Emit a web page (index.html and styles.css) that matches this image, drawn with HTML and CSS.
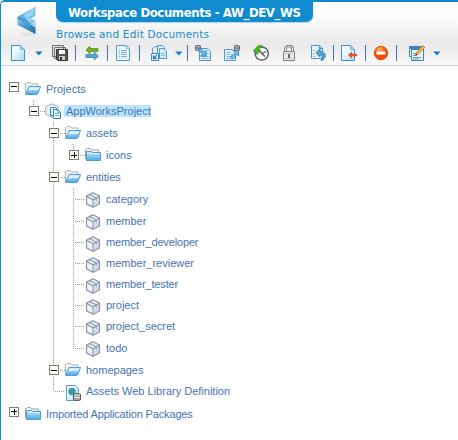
FILE: index.html
```html
<!DOCTYPE html>
<html lang="en">
<head>
<meta charset="utf-8">
<title>Workspace Documents</title>
<link rel="stylesheet" href="styles.css">
</head>
<body>
<svg class="defs" aria-hidden="true">
  <defs>
    <linearGradient id="paper" x2="1" y2="1"><stop offset="0" stop-color="#fff"/><stop offset=".4" stop-color="#e8f6ff"/><stop offset="1" stop-color="#a8dafb"/></linearGradient>
    <linearGradient id="blue" x2="0" y2="1"><stop offset="0" stop-color="#cbe9fc"/><stop offset="1" stop-color="#4ba8e6"/></linearGradient>
    <linearGradient id="cubeR" x2="1" y2="1"><stop offset="0" stop-color="#f2f4fb"/><stop offset="1" stop-color="#b8c3e0"/></linearGradient>
    <radialGradient id="orange" cx=".4" cy=".25"><stop offset="0" stop-color="#ffb25a"/><stop offset="1" stop-color="#ea4d08"/></radialGradient>
    <linearGradient id="logoA" x2="1" y2="0"><stop offset="0" stop-color="#2b7fc0"/><stop offset="1" stop-color="#8accf2"/></linearGradient>
    <linearGradient id="logoB" x2="1" y2="1"><stop offset="0" stop-color="#82c8f0"/><stop offset="1" stop-color="#1b66a8"/></linearGradient>
    <symbol id="open" viewBox="0 0 16 16"><path d="M.5 13V2.500h1l1-1h3l1 1.500h6.500V6" fill="#f4f6f7" stroke="#a9b2b8"/><path d="M.7 13.500 4 5.500h11.500L13 12.500l-1.500 1z" fill="url(#blue)" stroke="#4f9fd4"/><path d="M4.600 6.400h9.800l-.8 2-9.900 1z" fill="#e1f4ff"/></symbol>
    <symbol id="closed" viewBox="0 0 16 16"><path d="M.5 12V2.500h1l1-1h3l1 1.500h7V5" fill="#f2f4f5" stroke="#9aa4aa"/><path d="M1.500 13.500V4.500h5l1 1h8v8z" fill="url(#blue)" stroke="#4a9cd3"/><path d="M2.500 6.500h12" stroke="#d4edfc"/></symbol>
    <symbol id="cube" viewBox="0 0 16 16"><path d="m8 .8 6.500 3.400v7.600L8 15.300 1.500 11.800V4.200z" fill="#eff2f8" stroke="#8b96a1" stroke-width="1.200"/><path d="M8 8v6.600l6-3.300V4.800z" fill="url(#cubeR)"/><path d="m1.500 4.300 6.500 3.500 6.500-3.500M8 7.800v7.300M4.700 2.600l6.500 3.500v2.400" fill="none" stroke="#8b96a1" stroke-width="1.100"/></symbol>
    <symbol id="project" viewBox="0 0 16 16"><path d="m7 .8 6.200 3v7.400L7 14.300.8 11.200V3.800z" fill="#f2f3f5" stroke="#a5aab0"/><path d="M5.500 4.500h5l2 2v6h-7z" fill="#def2ff" stroke="#2b87c7"/><path d="M8.500 6.500h4l3 3v6h-7z" fill="#f4fbff" stroke="#2b87c7"/><path d="M10 10.500h4m-4 2h4M12.500 6.500v3h3" fill="none" stroke="#68b2e2"/></symbol>
    <symbol id="weblib" viewBox="0 0 16 16"><path d="M1.500.500h9l3 3v12h-12z" fill="url(#paper)" stroke="#5a9fce"/><circle cx="7" cy="6.500" r="3.700" fill="#3a91d8"/><path d="M4 5c1-2 3-2 4-1L7 6 5 7zm4 2 2-1v2L8 10z" fill="#45a94b"/><path d="M8.500 9.500c0-1.200 7-1.200 7 0v5.300c0 1.200-7 1.200-7 0z" fill="#a0a0a0" stroke="#555"/><path d="M9 10h6m-6 2.500h6" stroke="#ededed"/></symbol>
    <symbol id="new" viewBox="0 0 16 16"><path d="M1.500.500h9l4 4v11h-13z" fill="url(#paper)" stroke="#418fc4"/><path d="M10.500.500v4h4" fill="#a5d9f8" stroke="#73b6df"/></symbol>
    <symbol id="save" viewBox="0 0 16 16"><path d="M.5.500h11v11H.5zM2.500 2.500h11v11h-11z" fill="#e3e3e3" stroke="#707070"/><path d="M4.500 4.500h11v11h-10l-1-1z" fill="#575757" stroke="#383838"/><path d="M7 5h6v4H7z" fill="#fff"/><path d="M7 11h6v4H7z" fill="#ccc"/><path d="M8 12h2v3H8z" fill="#333"/></symbol>
    <symbol id="swap" viewBox="0 0 16 16"><path d="m2 5 4-4v2.500h8v3H6V9z" fill="#72b51b" stroke="#4a8910" stroke-width=".7"/><path d="m14.300 11-4-4v2.500H2v3h8.300V15z" fill="#51a2d6" stroke="#2875ac" stroke-width=".7"/></symbol>
    <symbol id="list" viewBox="0 0 16 16"><path d="M1.500.500h10l3 3v12h-13z" fill="#e7f5fd" stroke="#4f9fd0"/><path d="M11.500.500v3h3" fill="#bce3fa" stroke="#73b6df"/><path d="M4 5.500h1m1 0h6m-8 2h1m1 0h6m-8 2h1m1 0h6m-8 2h1m1 0h6" stroke="#83afca"/></symbol>
    <symbol id="pages" viewBox="0 0 16 16"><path d="M1.500 13V3.500l3-2h5V12" fill="#e6edf2" stroke="#7894a5"/><path d="M6.500.500h5l2 2v8h-7z" fill="#e2f3fd" stroke="#4798cd"/><path d="M8.500 3.500h4l3 3v7h-7z" fill="#d6eefd" stroke="#4798cd"/><path d="M10 8.500h4m-4 2h4" stroke="#7cbee5"/><path d="M.5 8.500h7v7h-7z" fill="#f4fbff" stroke="#3b8bc0"/><path d="M6 10 2.500 13.500m0-3v3h3" fill="none" stroke="#1f7cbf" stroke-width="1.300"/></symbol>
    <symbol id="import" viewBox="0 0 16 16"><path d="M4.500 3.500h8l3 3v9h-11z" fill="#dff2fd" stroke="#4798cd"/><path d="M11 5.500h2M10 8.500h4m-8 3h8m-8 2h8" stroke="#84bedf"/><path d="M.5 1c0-.8 5-.8 5 0v4c0 .8-5 .8-5 0z" fill="#bbb" stroke="#666"/><path d="M1 3h4" stroke="#555"/><path d="m3 5 2-2 4.500 4.500 1.500-2V11H5.500L8 9.500z" fill="#6ebcf0" stroke="#1c78b9" stroke-width=".8"/></symbol>
    <symbol id="export" viewBox="0 0 16 16"><path d="M.5 4.500h8l3 3v8H.5z" fill="#e7f5fd" stroke="#4798cd"/><path d="M2 7.500h5m-5 2h6m-6 2h5m-5 2h6" stroke="#84bedf"/><path d="M10.500 1c0-.8 5-.8 5 0v4c0 .8-5 .8-5 0z" fill="#bbb" stroke="#666"/><path d="M11 3h4" stroke="#555"/><path d="m6.500 12 4.500-4.500L9 5.500h5.500V11l-1.800-2L9 14z" fill="#6ebcf0" stroke="#1c78b9" stroke-width=".8"/></symbol>
    <symbol id="history" viewBox="0 0 16 16"><circle cx="8.700" cy="8.500" r="6.600" fill="#f5fafb" stroke="#59666e" stroke-width="1.500"/><path d="m9 8.500-3-3m3 3 4-2M9 8.500l3 3" stroke="#4b545a" stroke-width="1.100"/><circle cx="9" cy="8.500" r="1" fill="#d73c24"/><path d="M9 .5C5 .2 2.500 2 2.200 5H.3L4 9.500 7.500 5H5.300C5.500 3.500 7 2.500 9 2.800z" fill="#50b81b" stroke="#23860c" stroke-width=".7"/></symbol>
    <symbol id="lock" viewBox="0 0 16 16"><path d="M4.500 7V4c0-3.800 7-3.800 7 0v3" fill="none" stroke="#808080" stroke-width="2.800"/><path d="M4.500 7V4c0-3.500 7-3.500 7 0v3" fill="none" stroke="#e8e8e8"/><path d="M2.500 6.500h11v9h-11z" fill="#eaeaea" stroke="#808080"/><path d="M4 8.500h8m-8 5h8" stroke="#c8c8c8"/><path d="M7 9h2v4H7z" fill="#666"/></symbol>
    <symbol id="revert" viewBox="0 0 16 16"><path d="M1.500.500h8l3 3v10h-11z" fill="#e0f3fe" stroke="#4798cd"/><path d="M9.500.500v3h3" fill="none" stroke="#4798cd"/><path d="M3 5.500h2m-2 3h2m-2 3h2" stroke="#e1a565"/><path d="M6 7.500 10 4v2.300c4 .2 6 3 5 6l-2.500 3H11c2-3 2-5-1-5.500V12z" fill="#54a9dc" stroke="#236ea5" stroke-width=".8"/></symbol>
    <symbol id="remove" viewBox="0 0 16 16"><path d="M.5.500h9l4 4v11H.5z" fill="url(#paper)" stroke="#418fc4"/><path d="M9.500.500v4h4" fill="#a5d9f8" stroke="#73b6df"/><path d="m7 10 4-3.500v2.300h5v2.400h-5v2.300z" fill="#ef4c20"/></symbol>
    <symbol id="stop" viewBox="0 0 16 16"><circle cx="8" cy="8" r="6.700" fill="url(#orange)" stroke="#dc4b10"/><rect x="3.500" y="6.500" width="9" height="3" rx=".5" fill="#fff"/></symbol>
    <symbol id="edit" viewBox="0 0 16 16"><path d="M.5 1.500h13v10H.5z" fill="#f2f9fd" stroke="#3d83b6"/><path d="M2.500 4.500h12v11h-12z" fill="#e7f5fd" stroke="#3d83b6"/><path d="M0 2.500h14" stroke="#3981c5" stroke-width="3"/><path d="M4 8.500h3m-3 2h3m-3 2h8m-8 1.500h6" stroke="#7197b0"/><path d="m6.500 10.500 1-3 6-7 2.300 1.800-6.500 7z" fill="#f7b848" stroke="#9b681d" stroke-width=".7"/><path d="m6.300 10.700 1-2 1.200 1z" fill="#333"/></symbol>
    <symbol id="drop" viewBox="0 0 8 5"><path d="M.2.500h7.300L3.900 4.500z" fill="#167bc4"/></symbol>
  </defs>
</svg>
<div class="window">
  <header class="header">
    <div class="brand">
      <svg class="logo" viewBox="0 0 22 32"><path d="M4 27 19 26v3L8 31z" fill="#e1e4e6"/><path d="M18.500 1v9l-5 2.500L18.500 15v5L.5 14v-3z" fill="url(#logoA)"/><path d="m18.500 1-1 7-8 5-9-2z" fill="#69b4e3"/><path d="m18.500 1-3 8-6 4-3-4z" fill="#9bd3f3"/><path d="M.5 12v7l18 9v-7z" fill="url(#logoB)"/><path d="m9 13 4.500-1v4h5v4z" fill="#a8dbf5"/><path d="m.5 12 9 1 4 5-1 3z" fill="#4c9fd8"/></svg>
      <div class="titles">
        <h1 class="title"><span>Workspace Documents - AW_DEV_WS</span></h1>
        <p class="subtitle">Browse and Edit Documents</p>
      </div>
    </div>
    <nav class="toolbar">
      <svg class="icon"><use href="#new"/></svg>
      <svg class="drop"><use href="#drop"/></svg>
      <svg class="icon"><use href="#save"/></svg>
      <i class="sep"></i>
      <svg class="icon"><use href="#swap"/></svg>
      <i class="sep"></i>
      <svg class="icon"><use href="#list"/></svg>
      <i class="sep"></i>
      <svg class="icon"><use href="#pages"/></svg>
      <svg class="drop"><use href="#drop"/></svg>
      <i class="sep"></i>
      <svg class="icon"><use href="#import"/></svg>
      <svg class="icon"><use href="#export"/></svg>
      <svg class="icon"><use href="#history"/></svg>
      <svg class="icon"><use href="#lock"/></svg>
      <svg class="icon"><use href="#revert"/></svg>
      <i class="sep"></i>
      <svg class="icon"><use href="#remove"/></svg>
      <i class="sep"></i>
      <svg class="icon"><use href="#stop"/></svg>
      <i class="sep"></i>
      <svg class="icon"><use href="#edit"/></svg>
      <svg class="drop"><use href="#drop"/></svg>
    </nav>
  </header>
  <ul class="tree">
    <li>
      <div class="row root"><i class="toggle"></i><svg class="icon"><use href="#open"/></svg><span class="label">Projects</span></div>
      <ul class="stub">
        <li>
          <div class="row"><i class="toggle"></i><svg class="icon"><use href="#project"/></svg><span class="label selected">AppWorksProject</span></div>
          <ul class="line">
            <li>
              <div class="row"><i class="toggle"></i><svg class="icon"><use href="#open"/></svg><span class="label">assets</span></div>
              <ul class="stub">
                <li><div class="row"><i class="toggle plus"></i><svg class="icon"><use href="#closed"/></svg><span class="label">icons</span></div></li>
              </ul>
            </li>
            <li>
              <div class="row"><i class="toggle"></i><svg class="icon"><use href="#open"/></svg><span class="label">entities</span></div>
              <ul class="line">
                <li class="row leaf"><svg class="icon"><use href="#cube"/></svg><span class="label">category</span></li>
                <li class="row leaf"><svg class="icon"><use href="#cube"/></svg><span class="label">member</span></li>
                <li class="row leaf short"><svg class="icon"><use href="#cube"/></svg><span class="label tight">member_developer</span></li>
                <li class="row leaf short"><svg class="icon"><use href="#cube"/></svg><span class="label">member_reviewer</span></li>
                <li class="row leaf short"><svg class="icon"><use href="#cube"/></svg><span class="label tight">member_tester</span></li>
                <li class="row leaf short"><svg class="icon"><use href="#cube"/></svg><span class="label">project</span></li>
                <li class="row leaf short"><svg class="icon"><use href="#cube"/></svg><span class="label">project_secret</span></li>
                <li class="row leaf"><svg class="icon"><use href="#cube"/></svg><span class="label">todo</span></li>
              </ul>
            </li>
            <li><div class="row"><i class="toggle"></i><svg class="icon"><use href="#open"/></svg><span class="label">homepages</span></div></li>
            <li class="row leaf short"><svg class="icon"><use href="#weblib"/></svg><span class="label">Assets Web Library Definition</span></li>
          </ul>
        </li>
      </ul>
    </li>
    <li><div class="row root last"><i class="toggle plus"></i><svg class="icon"><use href="#closed"/></svg><span class="label tight">Imported Application Packages</span></div></li>
  </ul>
</div>
</body>
</html>
```
FILE: styles.css
```css
* { box-sizing: border-box; }
body { margin: 0; background: #fff; font: 11px "Liberation Sans", Arial, sans-serif; color: #4474b4; }
.defs { display: block; width: 0; height: 0; }
.window { height: 440px; border-left: 1px solid #118bd0; border-top: 2px solid #118bd0; border-top-left-radius: 5px; overflow: hidden; }
.header { height: 64px; border-bottom: 1px solid #cbd6e6; background: linear-gradient(#fff 0, #fbfbfb 18px, #e9e9e9 42px, #fafafa 63px); }
.brand { display: flex; height: 41px; }
.logo { width: 22px; height: 32px; margin: 4px 17px 0 16px; flex: none; }
.titles { width: 257px; }
.title { height: 20px; margin: 0; padding: 1px 0 0 12px; background: #118bd0; border-radius: 0 0 7px 7px; box-shadow: 0 1px 1px #acd5ec; color: #fff; font: bold 13px/20px "DejaVu Sans Condensed", "DejaVu Sans", sans-serif; letter-spacing: -0.38px; white-space: nowrap; }
.subtitle { margin: 5px 0 0; color: #218bcd; font: 10.5px/14px "DejaVu Sans", sans-serif; letter-spacing: 0.2px; white-space: nowrap; }
.toolbar { display: grid; grid-template-columns: 25px 17px 23px 9px 23px 8px 24px 12px 24px 12px 8px 29px 29px 28px 29px 23px 8px 24px 8px 23px 13px 24px 8px; align-items: center; height: 20px; padding-left: 9px; }
.icon { display: block; width: 16px; height: 16px; flex: none; }
.drop { display: block; width: 8px; height: 5px; }
.sep { width: 1px; height: 16px; background: #4673ad; }
.tree, .tree ul { margin: 0; padding: 0; list-style: none; }
.tree { padding: 12px 0 0 8px; }
.tree ul { padding-left: 20px; }
.tree .line { background: repeating-linear-gradient(#a39b8e 0 1px, transparent 1px 2px) 24px 0 / 1px calc(100% - 10px) no-repeat; }
.tree .stub { background: repeating-linear-gradient(#a39b8e 0 1px, transparent 1px 2px) 24px 0 / 1px 6px no-repeat; }
.row { display: flex; align-items: center; height: 22px; }
.row::before { content: ""; order: 1; width: 6px; height: 1px; background: repeating-linear-gradient(90deg, transparent 0 1px, #a39b8e 1px 2px); }
.row .icon, .row .label { order: 2; }
.row.short { height: 21px; }
.row.short .label { margin-top: -1px; }
.row.last { height: 24px; }
.root::before { background: none; }
.root .toggle { margin-bottom: 5px; }
.leaf::before { width: 11px; margin-left: 5px; }
.leaf .icon { margin-top: 2px; }
.toggle { width: 10px; height: 10px; border: 1px solid #857d6e; background: linear-gradient(#000, #000) 50% 50% / 6px 1px no-repeat #fff; }
.toggle.plus { background: linear-gradient(#000, #000) 50% 50% / 6px 1px no-repeat, linear-gradient(#000, #000) 50% 50% / 1px 6px no-repeat #fff; }
.label { margin-left: 3px; padding: 0 1px 0 2px; line-height: 12px; white-space: nowrap; }
.tight { letter-spacing: -0.15px; }
.selected { margin-right: -1px; padding-right: 0; background: #bce4ff; }
```
